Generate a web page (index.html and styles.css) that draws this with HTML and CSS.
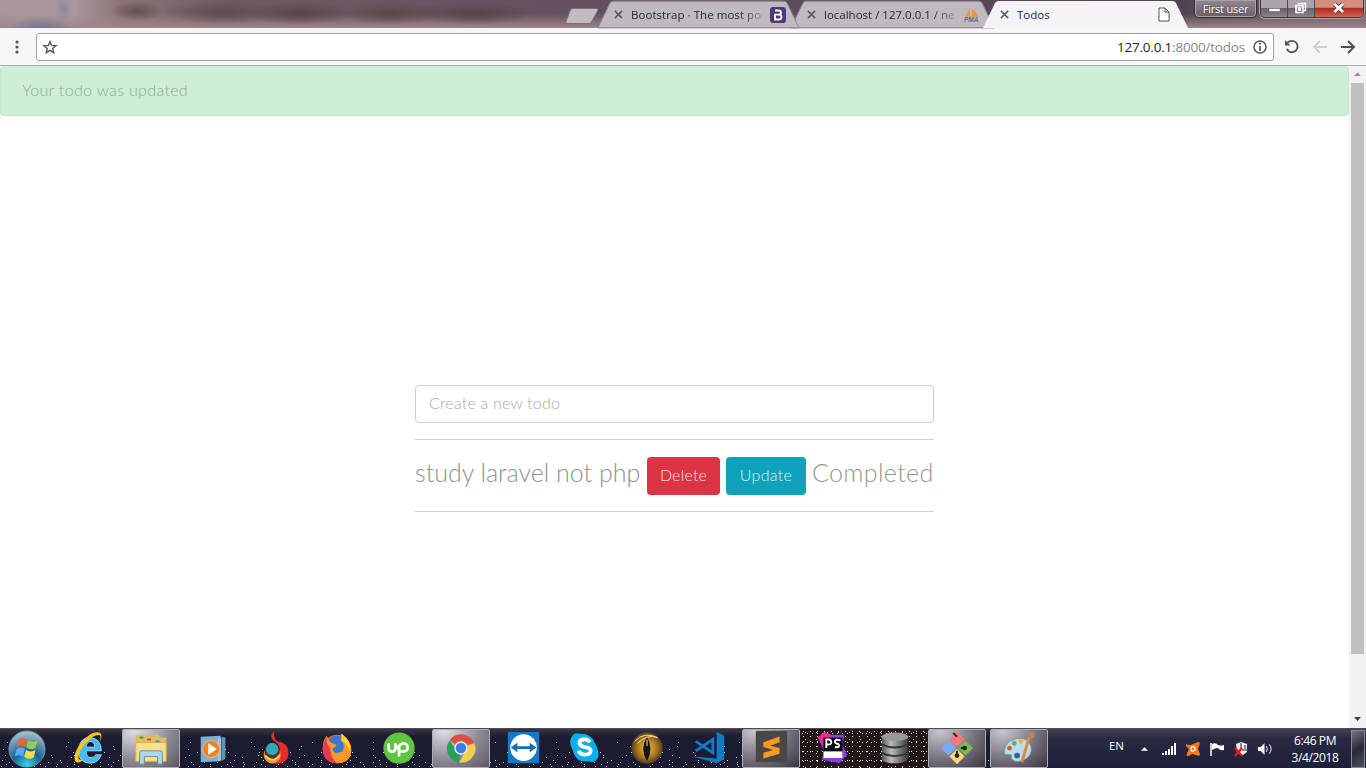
FILE: index.html
```html
<!DOCTYPE html>
<html lang="en">
<head>
<meta charset="utf-8">
<title>Todos</title>
<link rel="stylesheet" href="styles.css">
</head>
<body>
<div class="screen">
  <header class="tabstrip">
    <svg class="newtab" viewBox="0 0 34 18"><path d="M7 1.500H31Q34 1.500 32.500 4L27 14Q26 16.500 24 16.500H3Q0 16.500 1.500 13L5 4Q6 1.500 7 1.500Z" fill="#c0bcc0" stroke="#77717b"/></svg>
    <div class="tab tab-one">
      <svg class="shape" viewBox="0 0 203 28"><path d="M0 28L12 3Q13 1 16 1H187Q190 1 191 3L203 28Z" fill="#bfbabf" stroke="#8a838b"/></svg>
      <svg class="close" viewBox="0 0 10 10"><path d="M1 1L9 9M9 1L1 9"/></svg>
      <span class="tab-text fade"><span class="title-one">Bootstrap · The most po</span></span>
      <svg class="favicon" viewBox="0 0 16 16"><rect width="16" height="16" rx="3" fill="#4c3976"/><path d="M5 3.500H8.500Q11 3.500 11 5.600Q11 7.600 8.700 7.600H5M5 7.600H9Q11.500 7.600 11.500 10Q11.500 12.500 8.700 12.500H5Z" fill="none" stroke="#fff" stroke-width="1.800"/></svg>
    </div>
    <div class="tab tab-two">
      <svg class="shape" viewBox="0 0 205 28"><path d="M0 28L12 3Q13 1 16 1H189Q192 1 193 3L205 28Z" fill="#bfbabf" stroke="#8a838b"/></svg>
      <svg class="close" viewBox="0 0 10 10"><path d="M1 1L9 9M9 1L1 9"/></svg>
      <span class="tab-text fade"><span class="title-two">localhost / 127.0.0.1 / ne</span></span>
      <span class="pma"><svg viewBox="0 0 16 10"><path d="M6 0V9H1Q4 6 6 0ZM8 2Q12 4 14 9H8Z" fill="#e99a35"/><path d="M1 9.500H15" stroke="#d6a16e"/></svg><b>PMA</b></span>
    </div>
    <div class="tab tab-three">
      <svg class="shape" viewBox="0 0 205 28"><path d="M0 28L12 3Q13 1 16 1H189Q192 1 193 3L205 28Z" fill="#f6f3f6"/></svg>
      <svg class="close" viewBox="0 0 10 10"><path d="M1 1L9 9M9 1L1 9"/></svg>
      <span class="tab-text"><span class="title-three">Todos</span></span>
      <svg class="document" viewBox="0 0 12 15"><path d="M1 1H7L11 5V14H1ZM7 1V5H11" fill="#fff" stroke="#555"/></svg>
    </div>
    <div class="user"><span>First user</span></div>
    <div class="window-buttons">
      <div class="wb"><svg viewBox="0 0 26 17"><path d="M8 8.500H19V11.500H8Z" fill="#fff" stroke="#555" stroke-width=".5"/></svg></div>
      <div class="wb"><svg viewBox="0 0 26 17"><path d="M10.500 4V3.500H17.500V10.500H16" fill="none" stroke="#fff" stroke-width="1.500"/><path d="M8 5.500H15V12.500H8ZM10.500 8V10H12.500V8Z" fill="none" stroke="#fff" stroke-width="1.600"/></svg></div>
      <div class="wb wb-close"><svg viewBox="0 0 47 17"><path d="M19.500 4L28 12M28 4L19.500 12" stroke="#554044" stroke-width="4.500"/><path d="M19.500 4L28 12M28 4L19.500 12" stroke="#fff" stroke-width="3"/></svg></div>
    </div>
  </header>
  <nav class="toolbar">
    <svg class="more" viewBox="0 0 4 14"><g fill="#555"><circle cx="2" cy="2" r="1.600"/><circle cx="2" cy="7" r="1.600"/><circle cx="2" cy="12" r="1.600"/></g></svg>
    <div class="address">
      <svg class="star" viewBox="0 0 14 14"><path d="M7 1.500L8.600 5.400L13 5.700L9.700 8.400L10.700 12.700L7 10.300L3.300 12.700L4.300 8.400L1 5.700L5.400 5.400Z" fill="none" stroke="#555" stroke-width="1.400"/></svg>
      <span class="url"><span class="host">127.0.0.1</span>:8000/todos</span>
      <svg class="info" viewBox="0 0 14 14"><circle cx="7" cy="7" r="6" fill="none" stroke="#555" stroke-width="1.500"/><path d="M7 3V4.700M7 6V11" stroke="#555" stroke-width="1.700"/></svg>
    </div>
    <svg class="reload" viewBox="0 0 16 16"><path d="M3 5Q5 2 8.500 2A6 6 0 1 1 3 10.500" fill="none" stroke="#555" stroke-width="2"/><path d="M1 1V7H7Z" fill="#555"/></svg>
    <svg class="arrow" viewBox="0 0 14 14"><path d="M14 7H1M7 1L1 7L7 13" stroke="#cfcfcf" stroke-width="1.800" fill="none"/></svg>
    <svg class="arrow" viewBox="0 0 14 14"><path d="M0 7H13M7 1L13 7L7 13" stroke="#505050" stroke-width="2" fill="none"/></svg>
  </nav>
  <div class="viewport">
    <main class="page">
      <div class="alert"><span>Your todo was updated</span></div>
      <section class="todos">
        <input class="new-todo" placeholder="Create a new todo" aria-label="Create a new todo">
        <hr>
        <div class="todo">
          <span class="todo-text">study laravel not php</span>
          <button class="btn delete">Delete</button>
          <button class="btn update">Update</button>
          <span class="completed">Completed</span>
        </div>
        <hr>
      </section>
    </main>
    <div class="scrollbar">
      <svg viewBox="0 0 17 17"><path d="M5 10L8.500 6.500L12 10Z" fill="#929292"/></svg>
      <div class="thumb"></div>
      <svg viewBox="0 0 17 17"><path d="M5 6L8.500 10L12 6Z" fill="#404044"/></svg>
    </div>
  </div>
  <footer class="taskbar">
    <div class="slot start"><svg viewBox="0 0 40 40"><defs><radialGradient id="orb" cx=".5" cy=".95" r=".9"><stop stop-color="#34d9ee"/><stop offset=".45" stop-color="#17618d"/><stop offset="1" stop-color="#a8bcc8"/></radialGradient></defs><circle cx="20" cy="20" r="19" fill="url(#orb)" stroke="#6994ad"/><path d="M12 10Q16 7 20 10L18 18Q14 15 9 18Z" fill="#ee6430"/><path d="M21 11Q26 14 31 11L29 19Q24 22 19 18Z" fill="#94cc50"/><path d="M9 20Q14 17 18 20L16 28Q12 25 7 28Z" fill="#58aaf2"/><path d="M19 21Q24 24 29 21L27 29Q21 32 17 28Z" fill="#ffd84c"/></svg></div>
    <div class="slot ie"><svg viewBox="0 0 40 40"><path d="M33 22H17Q17 29 22 29Q26 29 27 26H33Q30 35 21 35Q8 34 9 21Q10 8 21 8Q33 9 33 22ZM17 18H26Q26 12 21 12Q17 13 17 18Z" fill="#45b9f0" stroke="#a6e4fa" stroke-width=".8"/><path d="M32 12Q36 0 25 3C14 7 3 23 5 32Q7 37 15 31Q8 33 9 27C12 17 26 2 32 6Z" fill="#f3c729"/></svg></div>
    <div class="slot active"><svg viewBox="0 0 40 40"><path d="M4 8Q4 6 6 6H13L15 8H21V6H28L30 9H36V34H4Z" fill="#dfbd60"/><path d="M4 14H36V34H4Z" fill="#f7df8b" stroke="#d2ad55"/><path d="M8 9H12" stroke="#22a83b" stroke-width="2"/><path d="M16 11H20" stroke="#d94a2a" stroke-width="2"/><path d="M25 13H29" stroke="#3b91c9" stroke-width="2"/><path d="M8 37V25Q8 23 10 23H30Q32 23 32 25V37H27V29H13V37Z" fill="#a9d9ed" stroke="#638e9f"/></svg></div>
    <div class="slot"><svg viewBox="0 0 40 40"><path d="M6 7L27 6V33L6 34Z" fill="#7eb1d0"/><path d="M28 7L32 8V30L28 33Z" fill="#5f95b6"/><path d="M25 8V32M27 8V32" stroke="#c0dce9"/><circle cx="17" cy="20" r="9" fill="#f28224" stroke="#e4bf9b"/><path d="M14 14L23 20L14 26Z" fill="#fff"/></svg></div>
    <div class="slot"><svg viewBox="0 0 40 40"><path d="M18 1Q11 8 20 13Q27 19 22 29L13 35Q34 38 33 23Q32 13 22 12Q17 10 18 1Z" fill="#ec2a2d"/><circle cx="16" cy="26" r="9" fill="#e99a30"/><circle cx="16" cy="23" r="8" fill="#55332a"/><circle cx="16" cy="20" r="6.500" fill="#30a9b0"/><path d="M9 27Q17 36 24 26" fill="none" stroke="#f9d45e" stroke-width="2"/></svg></div>
    <div class="slot"><svg viewBox="0 0 40 40"><g transform="translate(-1 0)"><circle cx="20" cy="20" r="15" fill="#f45b30"/><circle cx="20" cy="16" r="10" fill="#347ad4"/><path d="M24 4Q35 11 35 22Q34 35 20 35Q5 34 5 19Q5 11 9 6L13 13L20 16L15 20Q17 27 26 22Q29 15 24 11Z" fill="#fb9829"/><path d="M5 17Q4 34 20 35Q12 28 13 19Q8 15 9 6Z" fill="#ec364b"/><path d="M25 4Q36 12 34 24Q31 15 25 11Z" fill="#ffd62c"/></g></svg></div>
    <div class="slot"><svg viewBox="0 0 40 40"><circle cx="19" cy="19" r="16.500" fill="#5fc53f"/><path d="M8 14V19Q8 23 12 23Q15 23 15 19V14M19 28V19Q19 14 24 14Q29 15 28 20Q26 24 20 22Q17 20 15 14" fill="none" stroke="#fff" stroke-width="2.800"/></svg></div>
    <div class="slot active"><svg viewBox="0 0 40 40"><path d="M20 20L8 12A14.500 14.500 0 0 1 34 16H20Z" fill="#dd4f43"/><path d="M20 20L18 35A14.500 14.500 0 0 1 8 12L15 23Z" fill="#28a05a"/><path d="M20 20L34 15A14.500 14.500 0 0 1 18 35L25 23Z" fill="#f4ce50"/><circle cx="20" cy="20" r="7" fill="#eee"/><circle cx="20" cy="20" r="5.500" fill="#3880e8"/></svg></div>
    <div class="slot"><svg viewBox="0 0 40 40"><rect x="3" y="2" width="33" height="33" fill="#1479c8"/><circle cx="19.500" cy="18.500" r="14" fill="#fff"/><path d="M6 18.500L13 13.500V17H26V13.500L33 18.500L26 23.500V20H13V23.500Z" fill="#176eb5"/></svg></div>
    <div class="slot"><svg viewBox="0 0 40 40"><g transform="translate(-2 -1)"><path d="M15 5Q27 4 31 14Q36 23 35 29Q32 37 24 34Q11 36 8 22Q3 14 7 8Q10 3 15 5Z" fill="#0caee8"/><path d="M26 14Q24 10 20 11Q15 11 15 15Q16 18 21 19Q27 20 27 23Q26 27 21 27Q16 27 14 23" fill="none" stroke="#fff" stroke-width="4"/></g></svg></div>
    <div class="slot"><svg viewBox="0 0 40 40"><defs><radialGradient id="eye"><stop stop-color="#edbd36"/><stop offset=".6" stop-color="#b37a20"/><stop offset="1" stop-color="#51401d"/></radialGradient></defs><g transform="translate(-1 -1)"><circle cx="20" cy="20" r="16.500" fill="url(#eye)"/><path d="M20 8Q12 21 20 34Q27 21 20 8Z" fill="#151415"/><path d="M7 13Q17 2 31 9Q20 5 10 15M20 11V18" fill="none" stroke="#f5e3a5"/></g></svg></div>
    <div class="slot"><svg viewBox="0 0 40 40"><g transform="translate(-1 -1)"><path d="M28 3L36 7V32L28 36L3 29L28 31Z" fill="#147ac5"/><path d="M6 13L24 25V11L6 23" fill="none" stroke="#147ac5" stroke-width="3"/></g></svg></div>
    <div class="slot active dark"><svg viewBox="0 0 40 40"><rect x="4" y="2" width="33" height="33" fill="#484745"/><path d="M12 14L29 8V14L19 17.500L29 20V26L12 31V25L22 22L12 19Z" fill="#fa9920"/></svg></div>
    <div class="slot noise noise-first"><svg viewBox="0 0 40 40"><path d="M5 8L12 2L19 5L33 5L31 16L36 26L28 35L9 31L12 23Z" fill="#8a3fe5"/><path d="M5 8L12 2L19 5L12 18Z" fill="#ef2b8b"/><rect x="11" y="8" width="20" height="20" fill="#09060b"/><path d="M14 19V10H17Q20 11 19 14Q18 16 14 15M29 11Q24 9 23 12Q23 14 27 15Q29 19 23 18" fill="none" stroke="#fff" stroke-width="2"/><path d="M11 26H31" stroke="#fff" stroke-width="7"/></svg></div>
    <div class="slot noise"><svg viewBox="0 0 40 40"><defs><linearGradient id="metal"><stop stop-color="#555"/><stop offset=".35" stop-color="#bbb"/><stop offset="1" stop-color="#353535"/></linearGradient></defs><path d="M5 7V30Q5 35 18.500 35T33 30V7Z" fill="url(#metal)"/><ellipse cx="19" cy="7" rx="14" ry="4.500" fill="#999"/><path d="M5 15Q18 22 33 15M5 24Q18 31 33 24" fill="none" stroke="#333" stroke-width="2"/></svg></div>
    <div class="slot active dark"><svg viewBox="0 0 40 40"><path d="M20 3L28 11L20 19L12 11Z" fill="#f5787c"/><path d="M11 12L19 20L11 28L3 20Z" fill="#79aaf6"/><path d="M29 12L37 20L29 28L21 20Z" fill="#7abb50"/><path d="M20 21L28 29L20 37L12 29Z" fill="#fbd875"/><path d="M16 4L20 8M20 23V28M28 20H24" stroke="#202720" stroke-width="2"/><circle cx="20" cy="28" r="2.500" fill="#252729"/><circle cx="28" cy="20" r="2.500" fill="#252729"/></svg></div>
    <div class="slot active dark"><svg viewBox="0 0 40 40"><path d="M15 11C28 6 37 18 31 28C24 36 13 36 12 30Q13 26 9 27Q3 28 5 21Q7 13 15 11Z" fill="#badbea" stroke="#6c9cab"/><circle cx="10" cy="20" r="2.500" fill="#dc563a"/><circle cx="15" cy="15" r="2.500" fill="#55b64b"/><circle cx="22" cy="13" r="2.500" fill="#e9b63d"/><circle cx="18" cy="28" r="3" fill="#3c628f"/><path d="M31 8L23 35" stroke="#e28936" stroke-width="3"/><path d="M29 5L35 3L37 7L32 11Z" fill="#bb8456"/></svg></div>
    <div class="tray">
      <span class="language">EN</span>
      <svg class="up" viewBox="0 0 8 5"><path d="M0 4L4 0L8 4Z" fill="#fff"/></svg>
      <svg class="tray-icon signal" viewBox="0 0 16 16"><path d="M2 14V12M5 14V10M8 14V8M11 14V5M14 14V2" stroke="#fff" stroke-width="2"/></svg>
      <svg class="tray-icon avast" viewBox="0 0 16 16"><path d="M1 3Q5 5 8 3L13 1Q16 1 14 5L13 8L15 13Q15 16 11 14L7 13Q0 18 2 12L4 8Q0 5 1 3Z" fill="#fa7814"/><path d="M10 7Q6 4 6 8T10 9V6V10" fill="none" stroke="#fff" stroke-width="1.300"/></svg>
      <svg class="tray-icon" viewBox="0 0 16 16"><path d="M2 2V15" stroke="#fff" stroke-width="1.500"/><path d="M3 3Q7 1 9 4Q12 5 15 4V9Q11 10 9 7Q6 7 3 9Z" fill="#fff"/></svg>
      <svg class="tray-icon network" viewBox="0 0 16 16"><path d="M3 3L8 1L14 3V11L10 14L4 12Z" fill="#eee"/><path d="M8 2V7M12 4V8M9 9H15" stroke="#242538"/><path d="M2 7L9 15M9 7L2 15" stroke="#eb1717" stroke-width="2.200"/></svg>
      <svg class="tray-icon sound" viewBox="0 0 17 16"><path d="M1 6H4L8 2V14L4 10H1Z" fill="#fff"/><path d="M10 5Q12 8 10 11M13 3Q17 8 13 13" stroke="#fff" fill="none"/></svg>
      <div class="clock"><span>6:46 PM</span><span>3/4/2018</span></div>
      <div class="show-desktop"></div>
    </div>
  </footer>
</div>
</body>
</html>
```
FILE: styles.css
```css
* { box-sizing: border-box; }
body { margin: 0; font-family: "Open Sans", sans-serif; }
svg { display: block; flex: none; overflow: visible; }
.screen { width: 1366px; height: 768px; overflow: hidden; display: flex; flex-direction: column; background: #fff; }
.tabstrip { height: 28px; display: flex; align-items: flex-start; padding-left: 565px; background:
  radial-gradient(ellipse 33px 12px at 41px 29px, #737894 0, transparent),
  radial-gradient(ellipse 9px 14px at 64px 9px, #8d8894, transparent),
  radial-gradient(ellipse 25px 10px at 137px 11px, #635052, transparent),
  radial-gradient(ellipse 60px 12px at 224px 12px, #5f4b50, transparent),
  radial-gradient(ellipse 54px 12px at 300px 13px, #584546, transparent),
  radial-gradient(ellipse 50px 12px at 390px 13px, #5c4848, transparent),
  radial-gradient(ellipse 60px 12px at 475px 13px, #554549, transparent),
  linear-gradient(#63505f00 50%, #9d8588 100%),
  linear-gradient(90deg, #a8969a 0, #aa979e 75px, #8d7476 120px, #705b64 230px, #66505f 560px, #514452 1180px, #766369 100%); }
.newtab { width: 34px; height: 18px; margin-top: 7px; }
.tab { position: relative; height: 28px; display: flex; align-items: center; padding: 1px 0 0 16px; color: #292735; font-size: 11.500px; }
.shape { position: absolute; inset: 0; width: 100%; height: 100%; }
.tab-one { width: 201px; margin-left: -1px; z-index: 1; }
.tab-two { width: 203px; margin-left: -8px; padding-left: 16px; }
.tab-three { width: 205px; margin-left: -11px; padding-left: 17px; z-index: 2; }
.close { position: relative; width: 9px; height: 9px; stroke: #5c595e; stroke-width: 1.700; }
.tab-text { position: relative; margin-left: 8px; width: 134px; white-space: nowrap; }
.fade { mask-image: linear-gradient(90deg, #000 80%, #0004 98%); }
.title-one { letter-spacing: .05px; }
.favicon { position: relative; width: 16px; height: 16px; margin-left: 5px; }
.pma { position: relative; margin-left: 6px; width: 16px; height: 15px; font: italic 6.500px/5px "Liberation Sans", sans-serif; color: #6c668d; }
.pma svg { width: 16px; height: 10px; }
.pma b { display: block; }
.document { position: relative; width: 12px; height: 15px; margin-left: 7px; }
.user { width: 63px; height: 18px; margin-left: 6px; border: 1px solid #332e34; border-top: 0; border-radius: 0 0 5px 5px; box-shadow: inset 0 0 0 1px #aaa0a5; background: linear-gradient(#918b91, #686068); color: #fff; font-size: 11px; line-height: 17px; text-align: center; text-shadow: 0 0 2px #333; letter-spacing: -.2px; }
.window-buttons { display: flex; height: 18px; width: 104px; margin-left: 3px; border: 1px solid #443b41; border-top: 0; border-radius: 0 0 5px 5px; overflow: hidden; box-shadow: 0 0 0 1px #aaa0a5; }
.wb { width: 27px; border-right: 1px solid #50484e; background: linear-gradient(#aaa5aa 45%, #69616a 50%, #8d8389); }
.wb svg { width: 26px; height: 17px; }
.wb-close { width: 48px; border: 0; background: linear-gradient(#d18d80 43%, #ab2b20 48%, #d66250); }
.wb-close svg { width: 47px; }
.toolbar { height: 38px; display: flex; align-items: center; background: #f8f5f8; border-bottom: 1px solid #a8b2a8; }
.more { width: 4px; height: 14px; margin-left: 15px; }
.address { width: 1238px; height: 28px; margin-left: 17px; display: flex; align-items: center; background: #fff; border: 1px solid #9da49d; border-radius: 3px; }
.star { width: 14px; height: 14px; margin-left: 6px; }
.url { margin-left: auto; font-size: 13.500px; color: #858585; letter-spacing: -.2px; }
.host { color: #242424; }
.info { width: 14px; height: 14px; margin: 0 6px 0 8px; }
.reload { width: 15px; height: 15px; margin-left: 10px; }
.arrow { width: 14px; height: 14px; margin-left: 14px; }
.viewport { height: 662px; display: flex; }
.page { width: 1349px; font-family: Lato, "Open Sans", sans-serif; font-weight: 300; }
.alert { height: 50px; padding: 12px 21px; line-height: 24px; font-size: 16px; color: #89ab98; background: #cfeed6; border: 1px solid #c2e4cb; border-top: 0; border-radius: 4px; letter-spacing: .33px; }
.todos { width: 519px; margin: 269px auto 0; }
.new-todo { display: block; width: 519px; height: 38px; padding: 4px 13px 8px; border: 1px solid #cad0d2; border-radius: 4px; font: 300 16px/24px Lato, sans-serif; letter-spacing: .2px; background: #fff; }
.new-todo::placeholder { color: #a4a9ad; opacity: 1; }
hr { height: 1px; border: 0; margin: 16px 0 17px; background: #ccd2d4; }
.todo { height: 38px; display: flex; align-items: center; white-space: nowrap; color: #8c9296; font-size: 25px; }
.todo-text { width: 232px; line-height: 34px; margin-top: -8px; }
.btn { height: 38px; padding: 0 0 2px; border: 0; border-radius: 4px; font: 300 16px/36px Lato, sans-serif; color: #ffffffe0; }
.delete { width: 73px; background: #dc3345; letter-spacing: .2px; }
.update { width: 80px; margin-left: 6px; background: #10a2ba; letter-spacing: .3px; }
.completed { margin: -8px 0 0 6px; width: 122px; letter-spacing: .35px; color: #8d9c91; }
.todo + hr { margin: 16px 0 0; }
.scrollbar { width: 17px; display: flex; flex-direction: column; background: #f4f1f5; }
.scrollbar svg { width: 17px; height: 17px; }
.thumb { width: 13px; height: 571px; margin: 0 2px 57px; background: #c1bec2; }
.taskbar { height: 40px; display: flex; border-top: 1px solid #4d4955; background-color: #1b1c31;
  background-image: linear-gradient(#3a3642, #1b1c3100 20%),
    linear-gradient(90deg, #eee 1px, transparent 1px), linear-gradient(90deg, #eee 1px, transparent 1px), linear-gradient(90deg, #eee 1px, transparent 1px), linear-gradient(90deg, #eee 1px, transparent 1px), linear-gradient(90deg, #eee 1px, transparent 1px), linear-gradient(90deg, #eee 1px, transparent 1px), linear-gradient(90deg, #eee 1px, transparent 1px), linear-gradient(90deg, #eee 1px, transparent 1px), linear-gradient(90deg, #eee 1px, transparent 1px), linear-gradient(90deg, #eee 1px, transparent 1px);
  background-size: auto, 61px 1px, 47px 1px, 37px 1px, 31px 1px, 23px 1px, 19px 1px, 29px 1px, 13px 1px, 17px 1px, 11px 1px;
  background-position: 0 0, 7px 13px, 19px 17px, 3px 20px, 11px 23px, 5px 26px, 14px 28px, 2px 31px, 9px 33px, 6px 35px, 1px 37px;
  background-repeat: no-repeat, repeat-x, repeat-x, repeat-x, repeat-x, repeat-x, repeat-x, repeat-x, repeat-x, repeat-x, repeat-x; }
.slot { width: 62px; height: 39px; display: flex; align-items: center; justify-content: center; border-right: 3px solid transparent; }
.slot > svg { width: 38px; height: 38px; }
.start { width: 59px; }
.start > svg { margin-right: 2px; }
.ie { width: 63px; }
.active { border: 1px solid #aeadb3; width: 58px; margin-right: 4px; background: radial-gradient(ellipse at 20% 0, #e1e0e4, #8f8c97 55%, #5d5864); border-radius: 2px; }
.active > svg { margin-top: -2px; }
.dark { background: radial-gradient(ellipse at 20% 0, #cbc9ce, #77727e 55%, #3b3540); }
.noise { width: 64px; border: 0; background-color: #241717; background-image: radial-gradient(circle, #eee 0 .8px, transparent .95px), radial-gradient(circle, #eee 0 .8px, transparent .95px), radial-gradient(circle, #eee 0 .8px, transparent .95px); background-size: 7px 5px, 11px 7px, 5px 9px; }
.noise-first { margin-left: -4px; }
.tray { flex: 1; display: flex; align-items: center; color: #fff; margin-left: -4px; background: linear-gradient(#454351, #292a42 24%, #1e2038); }
.language { width: 18px; margin-left: 61px; font-size: 11.500px; margin-top: -7px; letter-spacing: -.2px; }
.up { width: 7px; height: 5px; margin: 1px 0 0 14px; }
.tray-icon { width: 16px; height: 16px; margin: 0 0 0 8px; }
.signal { margin-left: 13px; }
.clock { width: 64px; margin-left: 10px; display: flex; flex-direction: column; text-align: center; font-size: 12px; line-height: 17px; letter-spacing: -.4px; }
.show-desktop { width: 14px; height: 38px; margin-left: auto; margin-right: 1px; border: 1px solid #898792; background: linear-gradient(145deg, #777583, #282839 50%, #51505e); }
```
